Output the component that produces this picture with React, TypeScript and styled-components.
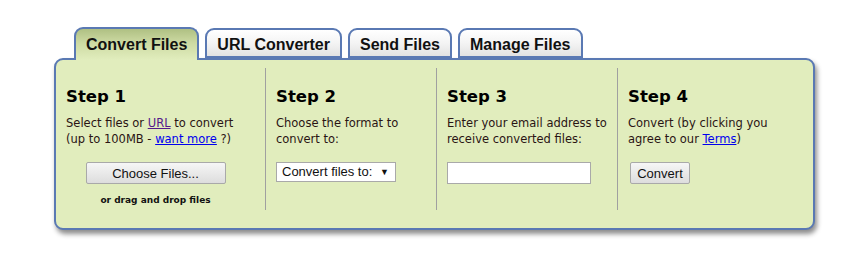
import styled, { createGlobalStyle } from "styled-components";

const GlobalStyle = createGlobalStyle`
  html, body {
    margin: 0;
    padding: 0;
    background: #ffffff;
  }
`;

const Page = styled.div`
  width: 863px;
  height: 261px;
  padding: 27px 0 0 54px;
  box-sizing: border-box;
`;

const Widget = styled.div`
  width: 761px;
`;

const TabBar = styled.div`
  display: flex;
  gap: 6px;
  padding-left: 20px;
  height: 31px;
  align-items: flex-end;
  position: relative;
  z-index: 1;
`;

const Tab = styled.div<{ $active?: boolean }>`
  height: ${({ $active }) => ($active ? "33px" : "30px")};
  margin-bottom: ${({ $active }) => ($active ? "-2px" : "0")};
  box-sizing: border-box;
  padding: 0 10px;
  padding-top: ${({ $active }) => ($active ? "7px" : "3px")};
  border: 2px solid #5a79b3;
  border-bottom: ${({ $active }) => ($active ? "none" : "2px solid #5a79b3")};
  border-radius: 9px 9px 0 0;
  background: ${({ $active }) =>
    $active
      ? "linear-gradient(#afc083 0%, #cddaa3 45%, #e1edbd 100%)"
      : "linear-gradient(#ffffff 0%, #f4f4f4 50%, #e2e2e2 100%)"};
  font-family: "Liberation Sans", Arial, sans-serif;
  font-weight: bold;
  font-size: 16px;
  color: #111;
  display: flex;
  align-items: ${({ $active }) => ($active ? "flex-start" : "center")};
`;

const Panel = styled.div`
  height: 172px;
  box-sizing: border-box;
  border: 2px solid #5a79b3;
  border-radius: 9px;
  background: #e1edbd;
  box-shadow: 2px 4px 5px rgba(0, 0, 0, 0.45);
  display: grid;
  grid-template-columns: 210px 171px 181px 1fr;
  padding: 8px 0 18px;
`;

const Step = styled.div<{ $last?: boolean }>`
  border-right: ${({ $last }) => ($last ? "none" : "1px solid #a0a0a0")};
  padding: 19px 10px 0 10px;
  font-family: "DejaVu Sans", Verdana, sans-serif;
  font-size: 11.5px;
  line-height: 16px;
  color: #2a1414;
`;

const StepTitle = styled.h3`
  margin: 0 0 8px;
  font-family: "DejaVu Sans", Verdana, sans-serif;
  font-size: 16.5px;
  font-weight: bold;
  color: #000;
  line-height: 20px;
`;

const StepText = styled.div`
  height: 47px;
`;

const Link = styled.a<{ $visited?: boolean }>`
  color: ${({ $visited }) => ($visited ? "#551a8b" : "#0000ee")};
  text-decoration: underline;
  cursor: pointer;
`;

const Center = styled.div`
  display: flex;
  flex-direction: column;
  align-items: center;
  padding-right: 10px;
`;

const Button = styled.button<{ $wide?: boolean }>`
  width: ${({ $wide }) => ($wide ? "140px" : "60px")};
  height: 22px;
  border: 1px solid #a9a9a9;
  border-radius: 2px;
  background: linear-gradient(#f6f6f6, #dddddd);
  font-family: "Liberation Sans", Arial, sans-serif;
  font-size: 13px;
  color: #111;
  padding: 0;
  margin-left: ${({ $wide }) => ($wide ? "0" : "2px")};
`;

const DropHint = styled.div`
  margin-top: 8px;
  font-family: "DejaVu Sans", Verdana, sans-serif;
  font-size: 9px;
  font-weight: bold;
  color: #111;
`;

const Select = styled.div`
  width: 120px;
  height: 20px;
  box-sizing: border-box;
  border: 1px solid #a9a9a9;
  background: #fff;
  display: flex;
  align-items: center;
  justify-content: space-between;
  padding: 0 6px 0 5px;
  font-family: "Liberation Sans", Arial, sans-serif;
  font-size: 13px;
  color: #111;
`;

const Arrow = styled.span`
  font-size: 9px;
`;

const EmailInput = styled.input`
  width: 144px;
  height: 22px;
  box-sizing: border-box;
  border: 1px solid #a9a9a9;
  background: #fff;
  display: block;
`;

export default function App() {
  return (
    <>
      <GlobalStyle />
      <Page>
        <Widget>
          <TabBar>
            <Tab $active>Convert Files</Tab>
            <Tab>URL Converter</Tab>
            <Tab>Send Files</Tab>
            <Tab>Manage Files</Tab>
          </TabBar>
          <Panel>
            <Step>
              <StepTitle>Step 1</StepTitle>
              <StepText>
                Select files or <Link $visited>URL</Link> to convert
                <br />
                (up to 100MB - <Link>want more</Link> ?)
              </StepText>
              <Center>
                <Button $wide>Choose Files...</Button>
                <DropHint>or drag and drop files</DropHint>
              </Center>
            </Step>
            <Step>
              <StepTitle>Step 2</StepTitle>
              <StepText>
                Choose the format to
                <br />
                convert to:
              </StepText>
              <Select>
                Convert files to: <Arrow>▼</Arrow>
              </Select>
            </Step>
            <Step>
              <StepTitle>Step 3</StepTitle>
              <StepText>
                Enter your email address to
                <br />
                receive converted files:
              </StepText>
              <EmailInput type="text" />
            </Step>
            <Step $last>
              <StepTitle>Step 4</StepTitle>
              <StepText>
                Convert (by clicking you
                <br />
                agree to our <Link>Terms</Link>)
              </StepText>
              <Button>Convert</Button>
            </Step>
          </Panel>
        </Widget>
      </Page>
    </>
  );
}
